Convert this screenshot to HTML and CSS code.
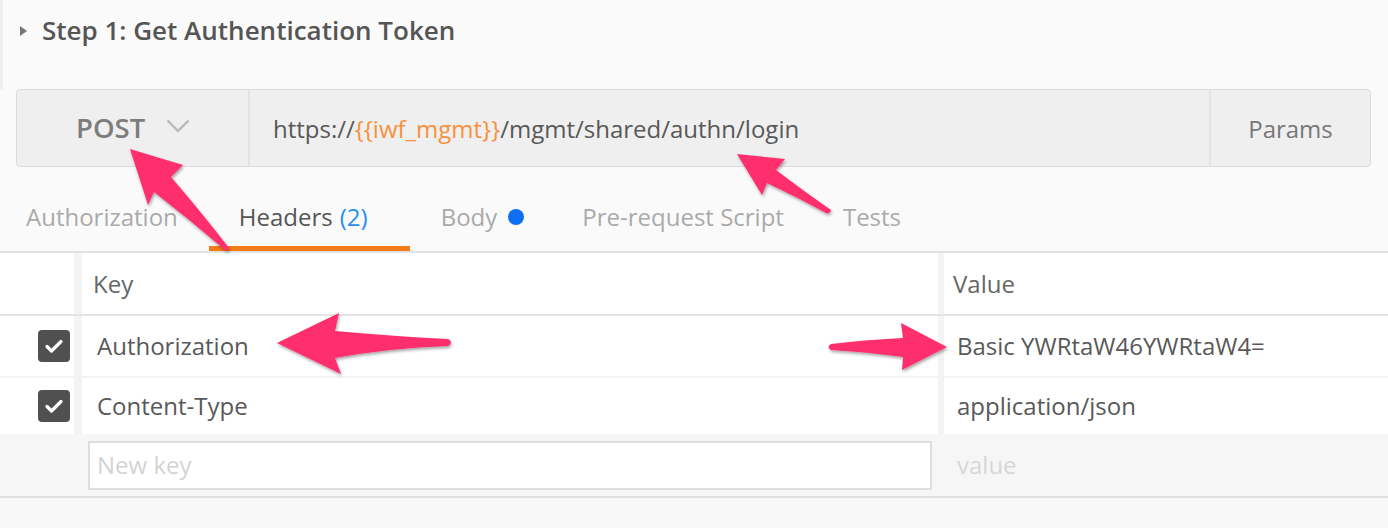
FILE: index.html
```html
<!DOCTYPE html>
<html>
<head>
<meta charset="utf-8">
<link rel="stylesheet" href="styles.css">
</head>
<body>
<div class="page">
  <div class="section-header">
    <span class="caret"></span>
    <span class="section-title">Step 1: Get Authentication Token</span>
  </div>

  <div class="request-bar">
    <div class="method">
      <span class="method-name">POST</span>
      <svg class="chevron" width="24" height="14" viewBox="0 0 24 14"><path d="M1.5 1.5 L12 12 L22.5 1.5" fill="none" stroke="#b9b9b9" stroke-width="2.4"/></svg>
    </div>
    <div class="url">https://<span class="var">{{iwf_mgmt}}</span>/mgmt/shared/authn/login</div>
    <div class="params">Params</div>
  </div>

  <div class="tabs">
    <div class="tab tab-first">Authorization</div>
    <div class="tab tab-active">Headers <span class="count">(2)</span></div>
    <div class="tab tab-body">Body <span class="dot"></span></div>
    <div class="tab tab-pre">Pre-request Script</div>
    <div class="tab">Tests</div>
  </div>

  <div class="table">
    <div class="row row-head">
      <div class="cell cell-check"></div>
      <div class="cell cell-key">Key</div>
      <div class="cell cell-val">Value</div>
    </div>
    <div class="row row-item">
      <div class="cell cell-check"><span class="checkbox"><svg width="20" height="16" viewBox="0 0 20 16"><path d="M3 8.5 L7.5 13 L17 3.5" fill="none" stroke="#fff" stroke-width="3.2" stroke-linecap="round" stroke-linejoin="round"/></svg></span></div>
      <div class="cell cell-key">Authorization</div>
      <div class="cell cell-val">Basic YWRtaW46YWRtaW4=</div>
    </div>
    <div class="row row-item row-second">
      <div class="cell cell-check"><span class="checkbox"><svg width="20" height="16" viewBox="0 0 20 16"><path d="M3 8.5 L7.5 13 L17 3.5" fill="none" stroke="#fff" stroke-width="3.2" stroke-linecap="round" stroke-linejoin="round"/></svg></span></div>
      <div class="cell cell-key">Content-Type</div>
      <div class="cell cell-val">application/json</div>
    </div>
    <div class="row row-new">
      <div class="cell cell-check"></div>
      <div class="cell cell-newkey"><div class="input">New key</div></div>
      <div class="cell cell-newval">value</div>
    </div>
  </div>
  <div class="footer-space"></div>

  <svg class="annotations" width="1388" height="528" viewBox="0 0 1388 528">
    <defs>
      <filter id="sh" x="-20%" y="-20%" width="140%" height="140%">
        <feDropShadow dx="1" dy="2" stdDeviation="1.6" flood-color="#000" flood-opacity="0.35"/>
      </filter>
    </defs>
    <g fill="#ff2e6c" filter="url(#sh)">
      <path d="M130,149 L183,165 L171,177 Q202,213 229,248 Q228,252 225,250 Q190,220 154,192 L148,205 Z"/>
      <path d="M737,154 L785,159 L776,170 Q805,192 831,210 Q830,214 826,213 Q797,197 767,183 L762,195 Z"/>
      <path d="M277,343 L339,313 L335,331 Q390,336 448,339 Q454,342 448,346 Q390,348 335,358 L341,374 Z"/>
      <path d="M947,347 L901,323 L903,338 Q862,340 831,344 Q826,347 831,350 Q866,352 903,357 L902,370 Z"/>
    </g>
  </svg>
</div>
</body>
</html>
```

FILE: styles.css
```css
* { box-sizing: border-box; }
html, body { margin: 0; padding: 0; }
body {
  background: #fafafa;
  font-family: "Open Sans", "Noto Sans", "Liberation Sans", sans-serif;
  color: #555;
  width: 1388px;
  height: 528px;
  overflow: hidden;
}
.page { position: relative; width: 1388px; height: 528px; }

.section-header {
  height: 89px;
  display: flex;
  align-items: flex-start;
  padding-top: 12px;
  border-left: 3px solid #efefef;
}
.caret {
  width: 0; height: 0;
  border-top: 5px solid transparent;
  border-bottom: 5px solid transparent;
  border-left: 7px solid #777;
  margin: 14px 0 0 17px;
}
.section-title {
  margin-left: 15px;
  font-size: 26px;
  font-weight: 600;
  line-height: 36px;
  color: #555;
}

.request-bar {
  margin: 0 17px 0 16px;
  height: 78px;
  display: flex;
  background: #efefef;
  border: 1px solid #dcdcdc;
  border-radius: 4px;
}
.method {
  width: 233px;
  display: flex;
  align-items: center;
  padding-left: 59px;
  border-right: 2px solid #e2e2e2;
}
.method-name {
  font-size: 27.5px;
  font-weight: 600;
  line-height: 36px;
  color: #7d7d7d;
}
.chevron { margin-left: 21px; margin-top: -4px; }
.url {
  flex: 1;
  display: flex;
  align-items: center;
  padding-left: 23px;
  font-size: 24px;
  color: #585858;
  white-space: pre;
}
.url .var { color: #f7913d; }
.params {
  width: 161px;
  display: flex;
  align-items: center;
  justify-content: center;
  border-left: 2px solid #e2e2e2;
  font-size: 24px;
  color: #777;
}

.tabs {
  display: flex;
  padding-top: 35px;
  border-bottom: 2px solid #e1e1e1;
}
.tab {
  padding: 0 30px 14px;
  line-height: 30px;
  font-size: 24px;
  color: #aaa;
  border-bottom: 5px solid transparent;
  display: flex;
  align-items: center;
}
.tab-first { padding-left: 26px; padding-right: 31px; }
.tab-active {
  color: #555;
  border-bottom-color: #f47a15;
  padding-right: 42px;
}
.tab-body { padding-left: 31px; padding-right: 28px; }
.tab-pre { padding-left: 30px; padding-right: 29px; }
.count { color: #2a8ef0; margin-left: 7px; }
.dot {
  display: inline-block;
  width: 16px; height: 16px;
  border-radius: 50%;
  background: #0f6ff2;
  margin-left: 11px;
}

.table { background: #fff; }
.row {
  display: grid;
  grid-template-columns: 74px 864px 1fr;
}
.cell {
  display: flex;
  align-items: center;
  font-size: 24px;
  line-height: 32px;
  color: #595959;
}
.cell-key { border-left: 8px solid #f4f4f4; padding-left: 11px; }
.cell-val { border-left: 6px solid #f4f4f4; padding-left: 9px; }
.row-head { height: 63px; border-bottom: 2px solid #e3e3e3; }
.row-head .cell { color: #666; }
.row-item { height: 60px; }
.row-item .cell-key { padding-left: 15px; }
.row-item .cell-val { padding-left: 13px; }
.row-second { height: 58px; border-top: 2px solid #f3f3f3; }
.cell-check { justify-content: flex-start; padding-left: 38px; }
.checkbox {
  width: 32px; height: 32px;
  border-radius: 4px;
  background: #505050;
  display: flex;
  align-items: center;
  justify-content: center;
}
.row-new {
  height: 64px;
  background: #f6f6f6;
  border-bottom: 2px solid #e1e1e1;
}
.cell-newkey { padding: 0 6px 0 14px; border-left: 0; }
.input {
  width: 100%;
  height: 49px;
  background: #fff;
  border: 2px solid #dedede;
  display: flex;
  align-items: center;
  padding-left: 7px;
  color: #d3d3d3;
  font-size: 24px;
}
.cell-newval { padding-left: 19px; color: #d6d6d6; }
.footer-space { height: 40px; background: #f8f8f8; }

.annotations {
  position: absolute;
  left: 0; top: 0;
  pointer-events: none;
}
```
